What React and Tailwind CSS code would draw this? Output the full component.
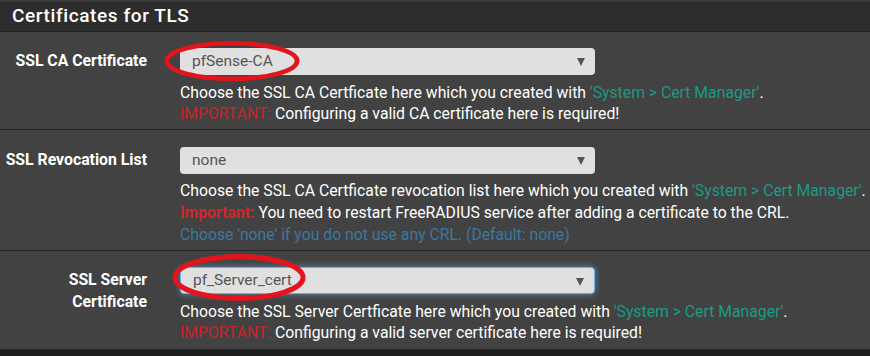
import React from "react";

function Ellipse({ className }) {
  return (
    <svg className={className} viewBox="0 0 140 46" fill="none" preserveAspectRatio="none">
      <ellipse cx="70" cy="23" rx="66" ry="19.5" stroke="#e3141c" strokeWidth="5" />
    </svg>
  );
}

function Select({ value, focus }) {
  return (
    <div
      className={
        "relative flex h-[27px] w-[415px] items-center rounded-[4px] bg-[#e0e0e0] pl-[12px] text-[15.5px] text-[#555555] " +
        (focus ? "border border-[#66afe9] shadow-[0_0_6px_rgba(102,175,233,0.7)]" : "")
      }
    >
      <span>{value}</span>
      <span className="absolute right-[10px] top-[10px] h-0 w-0 border-l-[4px] border-r-[4px] border-t-[8px] border-l-transparent border-r-transparent border-t-[#555555]" />
    </div>
  );
}

const link = "text-[#1b9a86]";
const help = "text-[15.75px] whitespace-nowrap";
const label = "mt-[2px] w-[147px] shrink-0 whitespace-nowrap text-right text-[15.8px] font-bold leading-[22px]";

export default function App() {
  return (
    <div
      className="relative h-[356px] w-[870px] overflow-hidden bg-[#1e1e1e] text-white"
      style={{ fontFamily: "Roboto, 'Liberation Sans', sans-serif" }}
    >
      <div className="h-[2px] bg-[#3a3a3a]" />
      <div className="flex h-[30px] items-center border-b border-[#222222] bg-[#2d2d2d] pl-[12px] text-[19px] font-medium tracking-[0.6px]">
        Certificates for TLS
      </div>

      {/* Row 1 */}
      <div className="flex h-[98px] border-b border-[#262626] bg-[#424242] pt-[16px]">
        <div className={label}>SSL CA Certificate</div>
        <div className="ml-[33px] flex flex-col">
          <Select value="pfSense-CA" />
          <div className={"mt-[7px] leading-[21px] " + help}>
            <div>
              Choose the SSL CA Certficate here which you created with{" "}
              <span className={link}>'System &gt; Cert Manager'</span>.
            </div>
            <div>
              <span className="text-[#c4262b]">IMPORTANT:</span> Configuring a valid CA certificate here is required!
            </div>
          </div>
        </div>
      </div>

      {/* Row 2 */}
      <div className="flex h-[121px] border-b border-[#262626] bg-[#424242] pt-[17px]">
        <div className={label}>SSL Revocation List</div>
        <div className="ml-[33px] flex flex-col">
          <Select value="none" />
          <div className={"mt-[6px] leading-[22px] " + help}>
            <div>
              Choose the SSL CA Certficate revocation list here which you created with{" "}
              <span className={link}>'System &gt; Cert Manager'</span>.
            </div>
            <div>
              <span className="font-bold text-[#d0262b]">Important:</span> You need to restart FreeRADIUS service after adding a certificate to the CRL.
            </div>
            <div className="text-[#3a78a3]">Choose 'none' if you do not use any CRL. (Default: none)</div>
          </div>
        </div>
      </div>

      {/* Row 3 */}
      <div className="flex h-[99px] border-b border-[#262626] bg-[#424242] pt-[16px]">
        <div className={label}>
          SSL Server
          <br />
          Certificate
        </div>
        <div className="ml-[33px] flex flex-col">
          <Select value="pf_Server_cert" focus />
          <div className={"mt-[7px] leading-[21px] " + help}>
            <div>
              Choose the SSL Server Certficate here which you created with{" "}
              <span className={link}>'System &gt; Cert Manager'</span>.
            </div>
            <div>
              <span className="text-[#c4262b]">IMPORTANT:</span> Configuring a valid server certificate here is required!
            </div>
          </div>
        </div>
      </div>

      <Ellipse className="absolute left-[163px] top-[40px] h-[42px] w-[138px]" />
      <Ellipse className="absolute left-[171px] top-[253px] h-[49px] w-[136px]" />
    </div>
  );
}
